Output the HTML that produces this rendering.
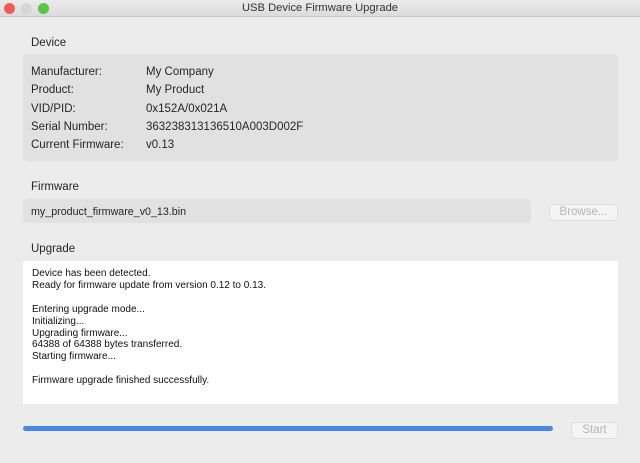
<!DOCTYPE html>
<html><head><style>
body{margin:0;width:640px;height:463px;background:#ececec;font-family:"Liberation Sans",sans-serif;position:relative;overflow:hidden;color:#262626}
.tb{position:absolute;left:0;top:0;width:640px;height:16px;background:linear-gradient(#ebebeb,#dcdcdc);border-bottom:1px solid #c8c8c8;text-align:center;font-size:11.2px;line-height:17px;color:#333}
.d{position:absolute;top:3px;width:11px;height:11px;border-radius:50%}
.a{position:absolute;font-size:11.5px}
.box{position:absolute;background:#e1e1e1;border-radius:4px}
.btn{position:absolute;background:#f4f4f4;border:1px solid #dedede;border-radius:4px;color:#b5b5b5;font-size:11.5px;text-align:center}
.log{position:absolute;left:23px;top:261px;width:595px;height:143px;background:#fff;font-size:10px;line-height:11.9px;color:#111}
.log div{position:absolute;left:9px;top:7px;white-space:pre}
</style></head><body>
<div class="tb">USB Device Firmware Upgrade</div>
<div class="d" style="left:4px;background:#ec5f58"></div>
<div class="d" style="left:21px;background:#d6d6d6"></div>
<div class="d" style="left:38px;background:#5bc448"></div>
<div class="a" style="left:31px;top:37px">Device</div>
<div class="box" style="left:23px;top:54px;width:595px;height:107px"></div>
<div class="a" style="left:31px;top:63px;line-height:18.3px">Manufacturer:<br>Product:<br>VID/PID:<br>Serial Number:<br>Current Firmware:</div>
<div class="a" style="left:146px;top:63px;line-height:18.3px">My Company<br>My Product<br>0x152A/0x021A<br>363238313136510A003D002F<br>v0.13</div>
<div class="a" style="left:31px;top:181px">Firmware</div>
<div class="box" style="left:23px;top:199px;width:508px;height:24px"></div>
<div class="a" style="left:31px;top:206px;font-size:10.7px">my_product_firmware_v0_13.bin</div>
<div class="btn" style="left:549px;top:204px;width:67px;height:15px;line-height:15px">Browse...</div>
<div class="a" style="left:31px;top:243px">Upgrade</div>
<div class="log"><div>Device has been detected.
Ready for firmware update from version 0.12 to 0.13.

Entering upgrade mode...
Initializing...
Upgrading firmware...
64388 of 64388 bytes transferred.
Starting firmware...

Firmware upgrade finished successfully.</div></div>
<div style="position:absolute;left:23px;top:426px;width:530px;height:5px;border-radius:3px;background:#4a86e6"></div>
<div class="btn" style="left:571px;top:422px;width:45px;height:15px;line-height:15px">Start</div>
</body></html>
